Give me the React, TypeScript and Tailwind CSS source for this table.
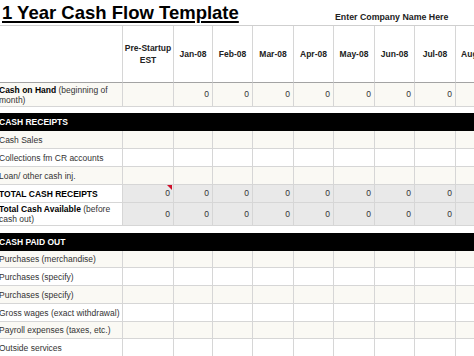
import React from "react";

const FONT = { fontFamily: '"Liberation Sans", Arial, sans-serif' };

const months = ["Jan-08", "Feb-08", "Mar-08", "Apr-08", "May-08", "Jun-08", "Jul-08", "Aug-08"];
const GRID = "grid grid-cols-[123px_51px_39px_40px_41px_40px_41px_40px_41px_40px] w-[495px]";

type RowProps = {
  label: React.ReactNode;
  h: string;
  labelBg: string;
  cellBg: string;
  values: (string | null)[];
  comment?: boolean;
};

function Row({ label, h, labelBg, cellBg, values, comment }: RowProps) {
  return (
    <div className={`${GRID} ${h}`}>
      <div className={`${labelBg} border-r border-b border-[#d6d6d6] flex items-center pl-0 -ml-[1px] text-[8.5px] leading-[10px] text-[#333]`}>
        <div>{label}</div>
      </div>
      {values.map((v, i) => (
        <div
          key={i}
          className={`${cellBg} relative border-r border-b border-[#d6d6d6] flex items-center justify-end pr-[3px] text-[8.5px] text-[#333]`}
        >
          {comment && i === 0 && (
            <div className="absolute top-0 right-[1px] w-0 h-0 border-t-[5px] border-l-[5px] border-t-[#d0102a] border-l-transparent" />
          )}
          {v}
        </div>
      ))}
    </div>
  );
}

function Bar({ text }: { text: string }) {
  return (
    <div className="h-[18px] bg-black flex items-center text-white font-bold text-[8.5px] -ml-[1px] w-[495px]">
      {text}
    </div>
  );
}

const empty = Array(9).fill(null);
const zerosNoPre = [null, ...Array(8).fill("0")];
const zeros = Array(9).fill("0");

export default function App() {
  const cream = "bg-[#faf9f4]";
  const white = "bg-white";
  const gray = "bg-[#e9e9e9]";
  return (
    <div className="w-[474px] h-[356px] overflow-hidden bg-white" style={FONT}>
      {/* Title */}
      <div className="h-[26px] w-[495px] border-b border-[#cfcfcf] flex items-end relative">
        <div className="pl-[2px] pb-[2px] text-[18.5px] leading-[20px] font-bold text-black underline decoration-2 underline-offset-[2px]">
          1 Year Cash Flow Template
        </div>
        <div className="absolute left-[335px] top-[11px] text-[8.8px] font-bold text-[#222]">
          Enter Company Name Here
        </div>
      </div>
      {/* Header */}
      <div className={`${GRID} h-[57px]`}>
        <div className="border-r border-b border-r-[#d6d6d6] border-b-[#a3a3a3]" />
        <div className="border-r border-b border-r-[#d6d6d6] border-b-[#a3a3a3] flex items-center justify-center text-center text-[8.5px] leading-[12px] font-bold text-[#222]">
          Pre-Startup
          <br />
          EST
        </div>
        {months.map((m) => (
          <div
            key={m}
            className="border-r border-b border-r-[#d6d6d6] border-b-[#a3a3a3] flex items-center justify-center text-[8.5px] font-bold text-[#222]"
          >
            {m}
          </div>
        ))}
      </div>
      <Row
        h="h-[24px]"
        labelBg={cream}
        cellBg={cream}
        values={zerosNoPre}
        label={
          <>
            <span className="font-bold text-black">Cash on Hand</span> (beginning of
            <br />
            month)
          </>
        }
      />
      <div className="h-[6px]" />
      <Bar text="CASH RECEIPTS" />
      <Row h="h-[18px]" labelBg={cream} cellBg={cream} values={empty} label="Cash Sales" />
      <Row h="h-[18px]" labelBg={white} cellBg={white} values={empty} label="Collections fm CR accounts" />
      <Row h="h-[18px]" labelBg={cream} cellBg={cream} values={empty} label="Loan/ other cash inj." />
      <Row
        h="h-[18px]"
        labelBg={white}
        cellBg={gray}
        values={zeros}
        comment
        label={<span className="font-bold text-black">TOTAL CASH RECEIPTS</span>}
      />
      <Row
        h="h-[23px]"
        labelBg={white}
        cellBg={gray}
        values={zeros}
        label={
          <>
            <span className="font-bold text-black">Total Cash Available</span> (before
            <br />
            cash out)
          </>
        }
      />
      <div className="h-[7px]" />
      <Bar text="CASH PAID OUT" />
      <Row h="h-[17px]" labelBg={cream} cellBg={cream} values={empty} label="Purchases (merchandise)" />
      <Row h="h-[18px]" labelBg={white} cellBg={white} values={empty} label="Purchases (specify)" />
      <Row h="h-[18px]" labelBg={cream} cellBg={cream} values={empty} label="Purchases (specify)" />
      <Row h="h-[18px]" labelBg={white} cellBg={white} values={empty} label="Gross wages (exact withdrawal)" />
      <Row h="h-[17px]" labelBg={cream} cellBg={cream} values={empty} label="Payroll expenses (taxes, etc.)" />
      <Row h="h-[18px]" labelBg={white} cellBg={white} values={empty} label="Outside services" />
    </div>
  );
}
